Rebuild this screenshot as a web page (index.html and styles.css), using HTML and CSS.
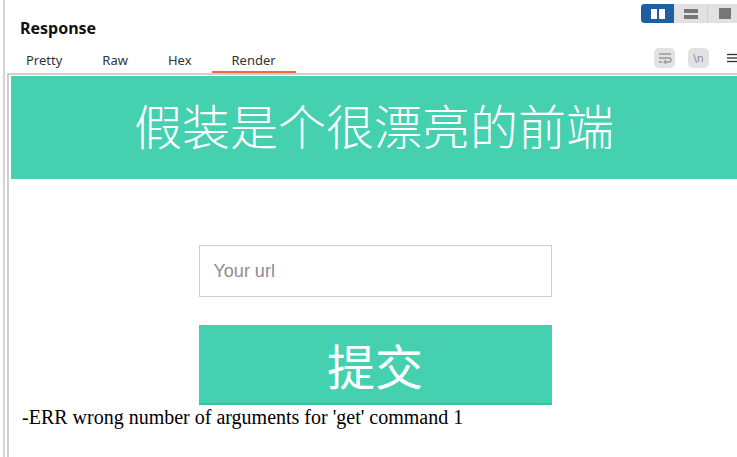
FILE: index.html
```html
<!DOCTYPE html>
<html>
<head>
<meta charset="utf-8">
<link rel="stylesheet" href="styles.css">
</head>
<body>
<div class="pane">
  <div class="head">
    <div class="title-row">
      <div class="title">Response</div>
      <div class="seg">
        <div class="seg-btn active">
          <svg width="14" height="10" viewBox="0 0 14 10"><rect x="0" y="0" width="6" height="10" fill="#fff"/><rect x="8" y="0" width="6" height="10" fill="#fff"/></svg>
        </div>
        <div class="seg-btn mid">
          <svg width="14" height="10" viewBox="0 0 14 10"><rect x="0" y="0" width="14" height="4" fill="#777"/><rect x="0" y="6" width="14" height="4" fill="#777"/></svg>
        </div>
        <div class="seg-btn last">
          <svg width="12" height="11" viewBox="0 0 12 11"><rect x="0" y="0" width="12" height="11" fill="#777"/></svg>
        </div>
      </div>
    </div>
    <div class="tab-row">
      <div class="tabs">
        <div class="tab">Pretty</div>
        <div class="tab">Raw</div>
        <div class="tab">Hex</div>
        <div class="tab on">Render</div>
      </div>
      <div class="tools">
        <div class="tool">
          <svg width="14" height="12" viewBox="0 0 14 12"><path d="M1 2h12M1 6h10a2 2 0 0 1 0 4H7M1 10h3" stroke="#999" stroke-width="1.4" fill="none"/><path d="M8 8.3 6 10l2 1.7" stroke="#999" stroke-width="1.2" fill="none"/></svg>
        </div>
        <div class="tool nl">\n</div>
        <div class="menu">
          <svg width="12" height="10" viewBox="0 0 12 10"><rect x="0" y="0" width="12" height="1.6" fill="#333"/><rect x="0" y="4.2" width="12" height="1.6" fill="#333"/><rect x="0" y="8.4" width="12" height="1.6" fill="#333"/></svg>
        </div>
      </div>
    </div>
  </div>
  <div class="frame">
    <div class="page">
      <h1 class="hero">假装是个很漂亮的前端</h1>
      <form class="form">
        <input class="url" type="text" placeholder="Your url">
        <button class="submit" type="button">提交</button>
      </form>
      <div class="err">-ERR wrong number of arguments for 'get' command 1</div>
    </div>
  </div>
</div>
</body>
</html>
```

FILE: styles.css
```css
html, body {
  margin: 0;
  padding: 0;
  background: #fff;
  overflow: hidden;
}
body {
  width: 737px;
  height: 457px;
  font-family: "Noto Sans", "Open Sans", sans-serif;
}
.pane {
  margin-left: 3px;
  border-left: 2px solid #d4d4d4;
  height: 457px;
  display: flex;
  flex-direction: column;
}
.head {
  height: 73px;
  display: flex;
  flex-direction: column;
}
.title-row {
  display: flex;
  justify-content: space-between;
  height: 46px;
}
.title {
  font-weight: 700;
  font-size: 16px;
  color: #111;
  padding: 18px 0 0 15px;
  line-height: 20px;
}
.seg {
  display: flex;
  flex: none;
  margin-top: 4px;
  height: 19px;
  width: 96px;
  background: #e1e1e1;
  border-radius: 3px 0 0 3px;
  overflow: hidden;
}
.seg-btn {
  flex: none;
  display: flex;
  align-items: center;
  justify-content: center;
}
.seg-btn.active {
  width: 33px;
  background: #1d5fa0;
  border-radius: 3px 0 0 3px;
}
.seg-btn.mid {
  width: 33px;
  border-right: 1px solid #d0d0d0;
}
.seg-btn.last {
  width: 29px;
  justify-content: flex-start;
  padding-left: 11px;
  box-sizing: border-box;
}
.tab-row {
  display: flex;
  justify-content: space-between;
  align-items: flex-end;
  height: 27px;
}
.tabs {
  display: flex;
  height: 27px;
}
.tab {
  font-size: 13px;
  color: #333;
  line-height: 28px;
  padding: 0 20px;
  height: 25px;
  border-bottom: 2px solid transparent;
}
.tab:first-child { padding-left: 21px; }
.tab.on {
  border-bottom-color: #f26a3b;
}
.tools {
  display: flex;
  align-self: flex-start;
  margin-top: 2px;
}
.tool {
  width: 21px;
  height: 20px;
  background: #e2e2e2;
  border-radius: 5px;
  display: flex;
  align-items: center;
  justify-content: center;
  color: #8a8a8a;
  font-size: 12px;
  margin-right: 13px;
}
.tool.nl {
  font-family: "DejaVu Sans", sans-serif;
  font-size: 11px;
  margin-right: 18px;
}
.menu {
  width: 10px;
  overflow: hidden;
  display: flex;
  align-items: center;
}
.frame {
  flex: 1;
  margin-left: 2px;
  border-top: 2px solid #cfcfcf;
  border-left: 2px solid #cfcfcf;
  padding: 1px 0 0 2px;
}
.page {
  display: flex;
  flex-direction: column;
}
.hero {
  margin: 0;
  background: #45d0af;
  color: #fff;
  height: 103px;
  display: flex;
  align-items: center;
  justify-content: center;
  font-family: "Noto Sans CJK SC", sans-serif;
  font-weight: 300;
  font-size: 48px;
  padding-bottom: 8px;
  box-sizing: border-box;
}
.form {
  margin: 66px 0 0 0;
  display: flex;
  flex-direction: column;
  align-items: center;
  padding-left: 2px;
}
.url {
  width: 353px;
  height: 52px;
  box-sizing: border-box;
  border: 1px solid #cfcfcf;
  padding: 0 14px;
  font-family: "Liberation Sans", Arial, sans-serif;
  font-size: 18px;
  outline: none;
}
.url::placeholder { color: #8d8d8d; }
.submit {
  margin-top: 28px;
  width: 353px;
  height: 80px;
  border: none;
  border-bottom: 2px solid #3fc19f;
  background: #45d0af;
  color: #fff;
  font-family: "Noto Sans CJK SC", sans-serif;
  font-size: 48px;
  padding: 0;
  line-height: 1;
}
.err {
  font-family: "Liberation Serif", "Times New Roman", serif;
  font-size: 20px;
  color: #000;
  margin: 1px 0 0 11px;
  line-height: 22px;
}
```
